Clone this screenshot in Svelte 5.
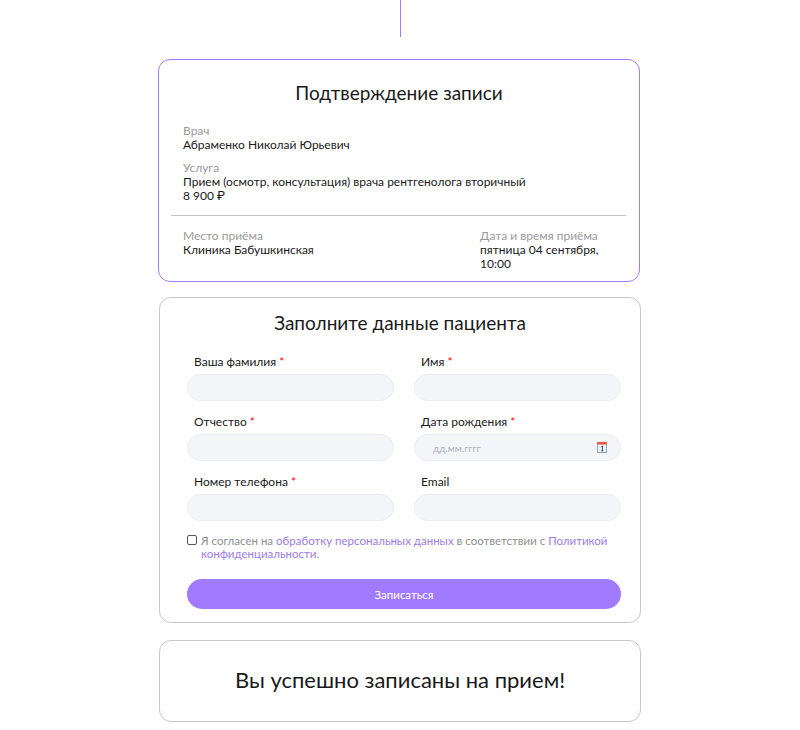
<script lang="ts">
  const fields = [
    { label: 'Ваша фамилия', required: true },
    { label: 'Имя', required: true },
    { label: 'Отчество', required: true },
    { label: 'Дата рождения', required: true, date: true },
    { label: 'Номер телефона', required: true },
    { label: 'Email', required: false },
  ];

  let agreed = $state(false);
</script>

<div class="page">
  <div class="connector"></div>

  <section class="card summary">
    <h2 class="summary-title">Подтверждение записи</h2>
    <div class="info">
      <div class="info-label">Врач</div>
      <div class="info-value">Абраменко Николай Юрьевич</div>
    </div>
    <div class="info service">
      <div class="info-label">Услуга</div>
      <div class="info-value">Прием (осмотр, консультация) врача рентгенолога вторичный</div>
      <div class="info-value">8 900 ₽</div>
    </div>
    <hr class="divider" />
    <div class="place-row">
      <div class="info">
        <div class="info-label">Место приёма</div>
        <div class="info-value">Клиника Бабушкинская</div>
      </div>
      <div class="info when">
        <div class="info-label">Дата и время приёма</div>
        <div class="info-value">пятница 04 сентября, 10:00</div>
      </div>
    </div>
  </section>

  <section class="card patient">
    <h2 class="patient-title">Заполните данные пациента</h2>
    <form class="fields" onsubmit={(e) => e.preventDefault()}>
      {#each fields as f}
        <div class="field">
          <label class="field-label" for={f.label}>{f.label}{#if f.required}<span class="req">{' *'}</span>{/if}</label>
          <div class="input-wrap">
            <input id={f.label} class="input" class:date={f.date} placeholder={f.date ? 'дд.мм.гггг' : ''} />
            {#if f.date}
              <svg class="cal" width="10" height="11" viewBox="0 0 10 11">
                <rect x="0.5" y="0.5" width="9" height="10" fill="#eef1f5" stroke="#9aa3b0" stroke-width="1" />
                <rect x="0" y="0" width="10" height="2.5" fill="#e8563f" />
                <path d="M4.2 4.8 L5.4 4 V8.8 M4.2 8.8 H6.4" fill="none" stroke="#3a4a66" stroke-width="1" />
              </svg>
            {/if}
          </div>
        </div>
      {/each}
    </form>

    <label class="agree">
      <input type="checkbox" class="check" bind:checked={agreed} />
      <span>Я согласен на <a href="#a">обработку персональных данных</a> в соответствии с <a href="#b">Политикой конфиденциальности</a>.</span>
    </label>

    <button class="submit" type="button">Записаться</button>
  </section>

  <section class="card done">
    <h2 class="done-title">Вы успешно записаны на прием!</h2>
  </section>
</div>

<style>
  :global(body) {
    margin: 0;
    background: #fff;
  }

  .page {
    display: flex;
    flex-direction: column;
    align-items: flex-start;
    width: 483px;
    margin-left: 158px;
    font-family: Lato, Roboto, sans-serif;
    color: #1a1a1a;
  }

  .connector {
    width: 1px;
    height: 37px;
    background: #a07aff;
    margin: 0 0 22px 242px;
  }

  .card {
    box-sizing: border-box;
    width: 482px;
    border: 1px solid #c8c8c8;
    border-radius: 12px;
    background: #fff;
  }

  h2 {
    margin: 0;
    font-weight: 400;
    text-align: center;
  }

  .summary {
    height: 223px;
    border-color: #a07aff;
    padding: 21px 12px 0;
  }
  .summary-title {
    font-size: 19px;
    line-height: 24px;
    margin-bottom: 19px;
  }
  .info {
    padding-left: 12px;
    font-size: 12px;
    line-height: 14px;
  }
  .info-label { color: #9a9a9a; }
  .info-value { color: #1a1a1a; }
  .service { margin-top: 9px; }
  .divider {
    border: 0;
    border-top: 1px solid #c4c4c4;
    margin: 12px 1px 13px 0;
  }
  .place-row {
    display: flex;
    justify-content: space-between;
  }
  .when {
    width: 147px;
    padding-left: 0;
  }

  .patient {
    height: 326px;
    margin: 15px 0 0 1px;
    padding: 13px 19px 0 27px;
  }
  .patient-title {
    font-size: 19px;
    line-height: 24px;
    margin: 0 0 20px -8px;
  }
  .fields {
    display: grid;
    grid-template-columns: 207px 207px;
    column-gap: 20px;
    row-gap: 14px;
  }
  .field-label {
    display: block;
    padding-left: 7px;
    font-size: 12px;
    line-height: 14px;
    margin-bottom: 5px;
    color: #1a1a1a;
  }
  .req { color: #f00; }
  .input-wrap { position: relative; }
  .input {
    display: block;
    box-sizing: border-box;
    width: 100%;
    height: 27px;
    border: 1px solid #ebedf1;
    border-radius: 14px;
    background: #f4f5f9;
    outline: none;
    padding: 0 18px;
    font-family: inherit;
    font-size: 10px;
  }
  .input::placeholder { color: #b0b4bb; }
  .cal {
    position: absolute;
    right: 14px;
    top: 8px;
  }

  .agree {
    display: flex;
    align-items: flex-start;
    gap: 4px;
    margin-top: 13px;
    font-size: 11.5px;
    line-height: 13px;
    color: #8f8f8f;
  }
  .check {
    appearance: none;
    flex: none;
    box-sizing: border-box;
    width: 10px;
    height: 10px;
    margin: 1px 0 0;
    border: 1px solid #555;
    border-radius: 2px;
    background: #fff;
  }
  .agree a {
    color: #9b7ce8;
    text-decoration: none;
  }

  .submit {
    display: block;
    width: 434px;
    height: 30px;
    margin-top: 19px;
    border: 0;
    border-radius: 15px;
    background: #a07aff;
    color: #fff;
    font-family: inherit;
    font-size: 11.5px;
  }

  .done {
    height: 82px;
    margin: 17px 0 0 1px;
    padding-top: 25px;
  }
  .done-title {
    font-size: 22px;
    line-height: 28px;
  }
</style>
